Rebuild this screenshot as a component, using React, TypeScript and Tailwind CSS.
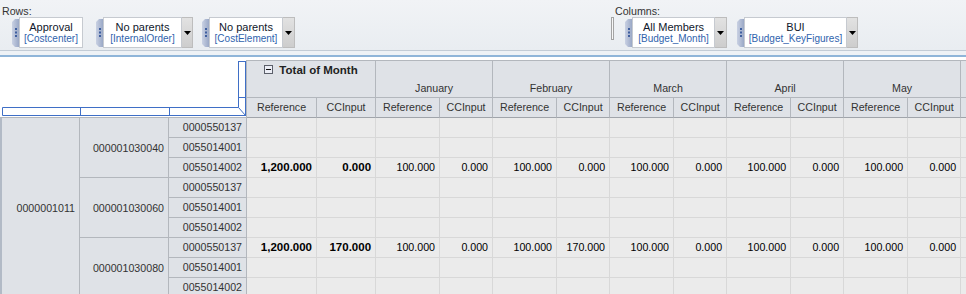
type Cell = [string, string]

const months = ["January", "February", "March", "April", "May"]

const zeroMonths: Cell[] = months.map(() => ["100.000", "0.000"])

const rows: { l3: string; total?: Cell; m?: Cell[] }[] = [
  { l3: "0000550137" },
  { l3: "0055014001" },
  { l3: "0055014002", total: ["1,200.000", "0.000"], m: zeroMonths },
  { l3: "0000550137" },
  { l3: "0055014001" },
  { l3: "0055014002" },
  {
    l3: "0000550137",
    total: ["1,200.000", "170.000"],
    m: [
      ["100.000", "0.000"],
      ["100.000", "170.000"],
      ["100.000", "0.000"],
      ["100.000", "0.000"],
      ["100.000", "0.000"],
    ],
  },
  { l3: "0055014001" },
  { l3: "0055014002" },
]

const groups: Record<number, string> = { 0: "000001030040", 3: "000001030060", 6: "000001030080" }

const Grip = () => (
  <svg width="7" height="28" viewBox="0 0 7 28" className="mt-[2px] shrink-0">
    <defs>
      <linearGradient id="gr" x1="0" y1="0" x2="1" y2="0">
        <stop offset="0" stopColor="#c9d1e3" />
        <stop offset="1" stopColor="#9aa8c6" />
      </linearGradient>
    </defs>
    <polygon points="3,0 7,0 7,28 3,28 0,25 0,3" fill="url(#gr)" />
    <rect x="3" y="9" width="2" height="2" fill="#3f5f9f" />
    <rect x="3" y="12.5" width="2" height="2" fill="#3f5f9f" />
    <rect x="3" y="16" width="2" height="2" fill="#3f5f9f" />
  </svg>
)

const Dropdown = ({ w }: { w: string }) => (
  <div
    className={`${w} h-[31px] shrink-0 border border-l-0 border-[#bdbdbd] bg-gradient-to-b from-[#e2e2e2] to-[#cdcdcd] flex items-center justify-center`}
  >
    <svg width="7" height="4" viewBox="0 0 7 4">
      <path d="M0 0H7L3.5 4Z" fill="#000" />
    </svg>
  </div>
)

const Chip = ({
  title,
  sub,
  w,
  dd,
}: {
  title: string
  sub: string
  w: string
  dd?: string
}) => (
  <div className="flex items-start h-[31px]">
    <Grip />
    <div className={`${w} h-[31px] shrink-0 border border-[#c6cad0] bg-white text-center pt-[3px]`}>
      <div className="text-[11px] leading-[12px] text-[#10182c] whitespace-nowrap">{title}</div>
      <div className="text-[10px] leading-[12px] text-[#2f63ad] whitespace-nowrap">{sub}</div>
    </div>
    {dd && <Dropdown w={dd} />}
  </div>
)

const Corner = () => (
  <svg width="247" height="57" viewBox="0 0 247 57" className="block">
    <g stroke="#3f6fc6" strokeWidth="1" fill="none">
      <path d="M238.5 1V47.5" />
      <path d="M238 1.5H246" />
      <path d="M245.5 1V56" />
      <path d="M238.5 37.5H245.5" />
      <path d="M2.5 47.5H238.5L245.5 55.5" />
      <path d="M2.5 55.5H245.5" />
      <path d="M2.5 47.5V55.5" />
      <path d="M80.5 47.5V55.5" />
      <path d="M169.5 47.5V55.5" />
    </g>
  </svg>
)

const MinusBox = () => (
  <svg width="9" height="9" viewBox="0 0 9 9" className="inline-block mr-[6px] -mt-[3px] align-middle">
    <rect x="0.5" y="0.5" width="8" height="8" fill="#eceef6" stroke="#5b5f6a" />
    <path d="M2 4.5H7" stroke="#111" />
  </svg>
)

const hdr = "bg-[#dfe2e7] border-r border-b border-[#b3b7bd] text-[#333] font-normal p-0"
const rowHdr = "bg-[#dfe2e7] border-r border-b border-[#b3b7bd] text-[#333] text-right pr-[4px] align-middle"
const dataCell = "bg-[#ebebeb] border-r border-b border-[#d8d8d8] text-right pr-[4px] align-middle text-black"

const Val = ({ v, bold }: { v?: string; bold?: boolean }) => (
  <td className={dataCell}>
    <div className={`h-[19px] leading-[19px] whitespace-nowrap ${bold ? "font-bold text-[11.5px]" : ""}`}>
      {v ?? ""}
    </div>
  </td>
)

export default function App() {
  return (
    <div className="w-[966px] h-[294px] overflow-hidden bg-white font-['Liberation_Sans',Arial,sans-serif] text-[10.67px]">
      {/* drop zones */}
      <div className="h-[50px] bg-gradient-to-b from-[#f1f3f6] to-[#e9edf1] flex">
        <div className="w-[295px] shrink-0">
          <div className="pl-[2px] pt-[6px] leading-[11px] text-[#333]">Rows:</div>
          <div className="flex pl-[12px]">
            <Chip title="Approval" sub="[Costcenter]" w="w-[64px]" />
            <div className="ml-[13px]">
              <Chip title="No parents" sub="[InternalOrder]" w="w-[79px]" dd="w-[11px]" />
            </div>
            <div className="ml-[9px]">
              <Chip title="No parents" sub="[CostElement]" w="w-[74px]" dd="w-[12px]" />
            </div>
          </div>
        </div>
        <div className="ml-[316px]">
          <div className="pl-[4px] pt-[6px] leading-[11px] text-[#333]">Columns:</div>
          <div className="flex items-start">
            <div className="w-[3px] h-[23px] border border-[#a3a3a3] bg-[#f7f7f7]" />
            <div className="ml-[11px]">
              <Chip title="All Members" sub="[Budget_Month]" w="w-[83px]" dd="w-[12px]" />
            </div>
            <div className="ml-[10px]">
              <Chip title="BUI" sub="[Budget_KeyFigures]" w="w-[103px]" dd="w-[11px]" />
            </div>
          </div>
        </div>
      </div>
      <div className="h-px bg-[#c3ccd6]" />
      <div className="h-[4px] bg-[#eef2f6]" />
      <div className="h-[2px] bg-[#8fb5d9]" />
      <div className="h-[3px] bg-white" />

      {/* pivot grid */}
      <table className="table-fixed border-separate border-spacing-0 w-[1025px]">
        <colgroup>
          <col className="w-[80px]" />
          <col className="w-[89px]" />
          <col className="w-[78px]" />
          <col className="w-[70px]" />
          <col className="w-[59px]" />
          {months.map((m) => [
            <col key={m + "r"} className="w-[64px]" />,
            <col key={m + "c"} className="w-[53px]" />,
          ])}
          <col className="w-[64px]" />
        </colgroup>
        <thead>
          <tr>
            <td colSpan={3} rowSpan={2} className="p-0 bg-white border-r border-b border-[#b3b7bd] align-top">
              <Corner />
            </td>
            <th colSpan={2} className={`${hdr} border-t align-top`}>
              <div className="h-[35px] pt-[2px] text-center text-[11.5px] font-bold leading-[14px] text-[#222]">
                <MinusBox />
                Total of Month
              </div>
            </th>
            {months.map((m) => (
              <th key={m} colSpan={2} className={`${hdr} border-t align-bottom`}>
                <div className="h-[35px] flex items-end justify-center pb-[2px] leading-[13px]">{m}</div>
              </th>
            ))}
            <th className={`${hdr} border-t`}>
              <div className="h-[35px]" />
            </th>
          </tr>
          <tr>
            {["Reference", "CCInput"].map((t, i) => (
              <th key={"t" + i} className={`${hdr} border-b-[#a0a4aa]`}>
                <div className="h-[19px] leading-[19px] text-center">{t}</div>
              </th>
            ))}
            {months.map((m) =>
              ["Reference", "CCInput"].map((t) => (
                <th key={m + t} className={`${hdr} border-b-[#a0a4aa]`}>
                  <div className="h-[19px] leading-[19px] text-center">{t}</div>
                </th>
              )),
            )}
            <th className={`${hdr} border-b-[#a0a4aa]`}>
              <div className="h-[19px]" />
            </th>
          </tr>
        </thead>
        <tbody>
          {rows.map((r, i) => (
            <tr key={i}>
              {i === 0 && (
                <td rowSpan={9} className={`${rowHdr} border-l-2 border-l-[#b2bac6]`}>
                  0000001011
                </td>
              )}
              {groups[i] && (
                <td rowSpan={3} className={rowHdr}>
                  {groups[i]}
                </td>
              )}
              <td className={rowHdr}>
                <div className="h-[19px] leading-[19px]">{r.l3}</div>
              </td>
              <Val v={r.total?.[0]} bold />
              <Val v={r.total?.[1]} bold />
              {months.map((m, k) => [
                <Val key={m + "r"} v={r.m?.[k][0]} />,
                <Val key={m + "c"} v={r.m?.[k][1]} />,
              ])}
              <Val />
            </tr>
          ))}
        </tbody>
      </table>
    </div>
  )
}
